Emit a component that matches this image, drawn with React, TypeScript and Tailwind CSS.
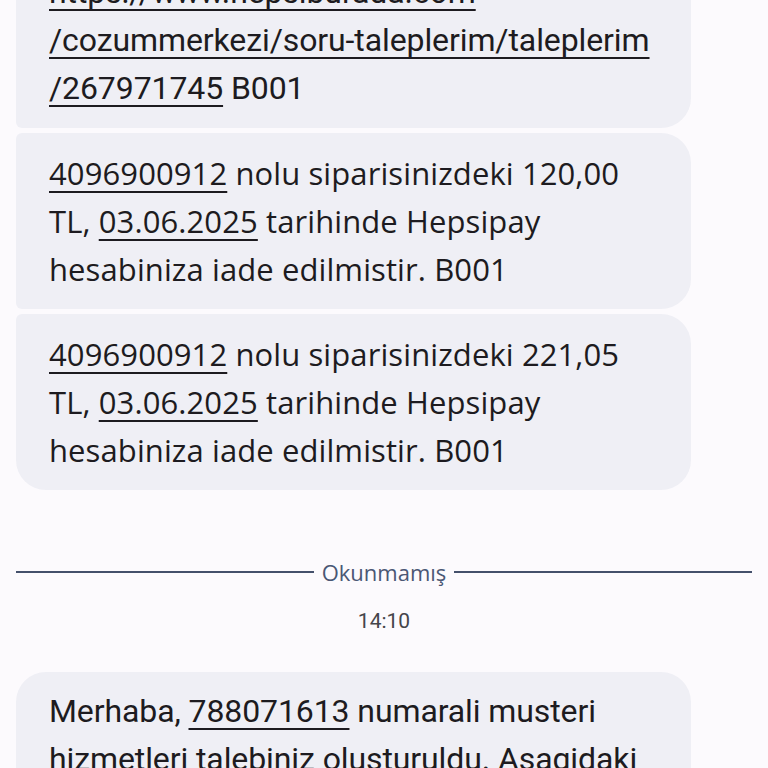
const Link = ({ children }: { children: React.ReactNode }) => (
  <span className="underline decoration-2 underline-offset-[6px]">{children}</span>
);

const narrow = "font-['Roboto',sans-serif] text-[32px] leading-[48px] tracking-[-0.1px]";
const round = "font-['Open_Sans',sans-serif] text-[31px] leading-[48px] tracking-[0.1px]";

const RefundBubble = ({ amount, corners }: { amount: string; corners: string }) => (
  <div className={`w-[675px] bg-[#efeff5] px-[33px] py-4 ${corners}`}>
    <p className={`${round} whitespace-nowrap`}>
      <Link>4096900912</Link> nolu siparisinizdeki {amount}
      <br />
      TL, <Link>03.06.2025</Link> tarihinde Hepsipay
      <br />
      hesabiniza iade edilmistir. B001
    </p>
  </div>
);

export default function App() {
  return (
    <div className="h-[768px] w-[768px] overflow-hidden bg-[#fcfafd] text-[#1d1b20]">
      <div className="flex flex-col gap-[5px] pl-4 -mt-[48px]">
        <div className="w-[675px] rounded-l-[6px] rounded-r-[30px] bg-[#efeff5] px-[33px] py-4">
          <p className={`${narrow} whitespace-nowrap`}>
            <Link>https://www.hepsiburada.com</Link>
            <br />
            <Link>/cozummerkezi/soru-taleplerim/taleplerim</Link>
            <br />
            <Link>/267971745</Link> B001
          </p>
        </div>
        <RefundBubble amount="120,00" corners="rounded-l-[6px] rounded-r-[30px]" />
        <RefundBubble amount="221,05" corners="rounded-tl-[6px] rounded-bl-[30px] rounded-r-[30px]" />
      </div>

      <div className="mt-[70px] flex items-center gap-2 px-4">
        <div className="h-[2px] flex-1 bg-[#44506b]" />
        <span className="font-['Open_Sans',sans-serif] text-[22px] leading-[24px] text-[#4a5774]">Okunmamış</span>
        <div className="h-[2px] flex-1 bg-[#44506b]" />
      </div>
      <div className="mt-[24px] text-center font-['Roboto',sans-serif] text-[21px] leading-[26px] text-[#45454a]">
        14:10
      </div>

      <div className="ml-4 mt-[38px] w-[675px] rounded-[30px] bg-[#efeff5] px-[33px] pt-[15px] pb-4">
        <p className={`${narrow} whitespace-nowrap`}>
          Merhaba, <Link>788071613</Link> numarali musteri
          <br />
          hizmetleri talebiniz olusturuldu. Asagidaki
        </p>
      </div>
    </div>
  );
}
